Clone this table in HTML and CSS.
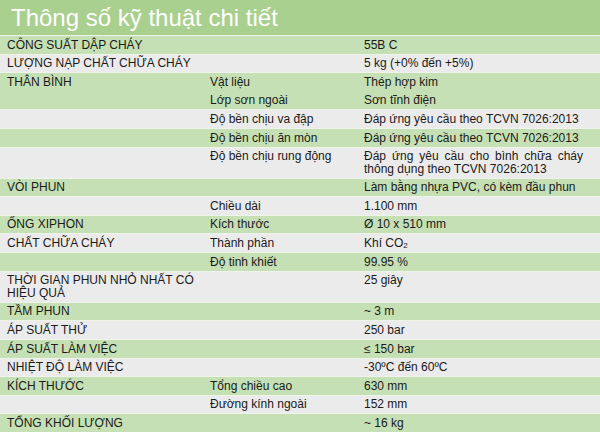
FILE: index.html
```html
<!DOCTYPE html>
<html lang="vi">
<head>
<meta charset="utf-8">
<title>Thông số kỹ thuật chi tiết</title>
<link rel="stylesheet" href="styles.css">
</head>
<body>
<div class="sheet">
  <h1 class="title">Thông số kỹ thuật chi tiết</h1>
  <table class="specs">
    <colgroup>
      <col class="c1"><col class="c2"><col class="c3">
    </colgroup>
    <tbody>
      <tr class="g"><td>CÔNG SUẤT DẬP CHÁY</td><td></td><td>55B C</td></tr>
      <tr class="w"><td>LƯỢNG NẠP CHẤT CHỮA CHÁY</td><td></td><td>5 kg (+0% đến +5%)</td></tr>
      <tr class="g"><td>THÂN BÌNH</td><td>Vật liệu</td><td>Thép hợp kim</td></tr>
      <tr class="g same"><td></td><td>Lớp sơn ngoài</td><td>Sơn tĩnh điện</td></tr>
      <tr class="w"><td></td><td>Độ bền chịu va đập</td><td>Đáp ứng yêu cầu theo TCVN 7026:2013</td></tr>
      <tr class="g"><td></td><td>Độ bền chịu ăn mòn</td><td>Đáp ứng yêu cầu theo TCVN 7026:2013</td></tr>
      <tr class="w"><td></td><td>Độ bền chịu rung động</td><td class="just">Đáp ứng yêu cầu cho bình chữa cháy thông dụng theo TCVN 7026:2013</td></tr>
      <tr class="g"><td>VÒI PHUN</td><td></td><td>Làm bằng nhựa PVC, có kèm đầu phun</td></tr>
      <tr class="w"><td></td><td>Chiều dài</td><td>1.100 mm</td></tr>
      <tr class="g"><td>ỐNG XIPHON</td><td>Kích thước</td><td>Ø 10 x 510 mm</td></tr>
      <tr class="w"><td>CHẤT CHỮA CHÁY</td><td>Thành phần</td><td>Khí CO<sub class="sub">2</sub></td></tr>
      <tr class="g"><td></td><td>Độ tinh khiết</td><td>99.95 %</td></tr>
      <tr class="w"><td>THỜI GIAN PHUN NHỎ NHẤT CÓ HIỆU QUẢ</td><td></td><td>25 giây</td></tr>
      <tr class="g"><td>TẦM PHUN</td><td></td><td>~ 3 m</td></tr>
      <tr class="w"><td>ÁP SUẤT THỬ</td><td></td><td>250 bar</td></tr>
      <tr class="g"><td>ÁP SUẤT LÀM VIỆC</td><td></td><td>≤ 150 bar</td></tr>
      <tr class="w"><td>NHIỆT ĐỘ LÀM VIỆC</td><td></td><td>-30ºC đến 60ºC</td></tr>
      <tr class="g"><td>KÍCH THƯỚC</td><td>Tổng chiều cao</td><td>630 mm</td></tr>
      <tr class="w"><td></td><td>Đường kính ngoài</td><td>152 mm</td></tr>
      <tr class="g"><td>TỔNG KHỐI LƯỢNG</td><td></td><td>~ 16 kg</td></tr>
    </tbody>
  </table>
</div>
</body>
</html>
```
FILE: styles.css
```css
html, body {
  margin: 0;
  padding: 0;
  background: #ffffff;
}
.sheet {
  width: 600px;
  font-family: "Liberation Sans", Arial, sans-serif;
  color: #1a1a1a;
}
.title {
  margin: 0;
  height: 35px;
  line-height: 35px;
  padding-left: 11px;
  font-size: 24px;
  font-weight: normal;
  color: #ffffff;
  background: #a9d08e;
}
.specs {
  width: 600px;
  border-collapse: collapse;
  table-layout: fixed;
  font-size: 12px;
  line-height: 12.5px;
}
.c1 { width: 204px; }
.c2 { width: 154px; }
.c3 { width: 242px; }
.specs td {
  vertical-align: top;
  padding: 2.6px 6px 2.5px 6px;
  border-top: 1px solid #eef4ea;
}
.specs td:first-child {
  padding-left: 7px;
}
.specs td:last-child {
  padding-right: 17px;
}
.g td { background: #c5e0b4; }
.w td { background: #ebebeb; }
.same td { border-top-color: #c5e0b4; }
.just {
  text-align: justify;
}
.sub {
  font-size: 8px;
  line-height: 0;
  vertical-align: -1px;
}
```
